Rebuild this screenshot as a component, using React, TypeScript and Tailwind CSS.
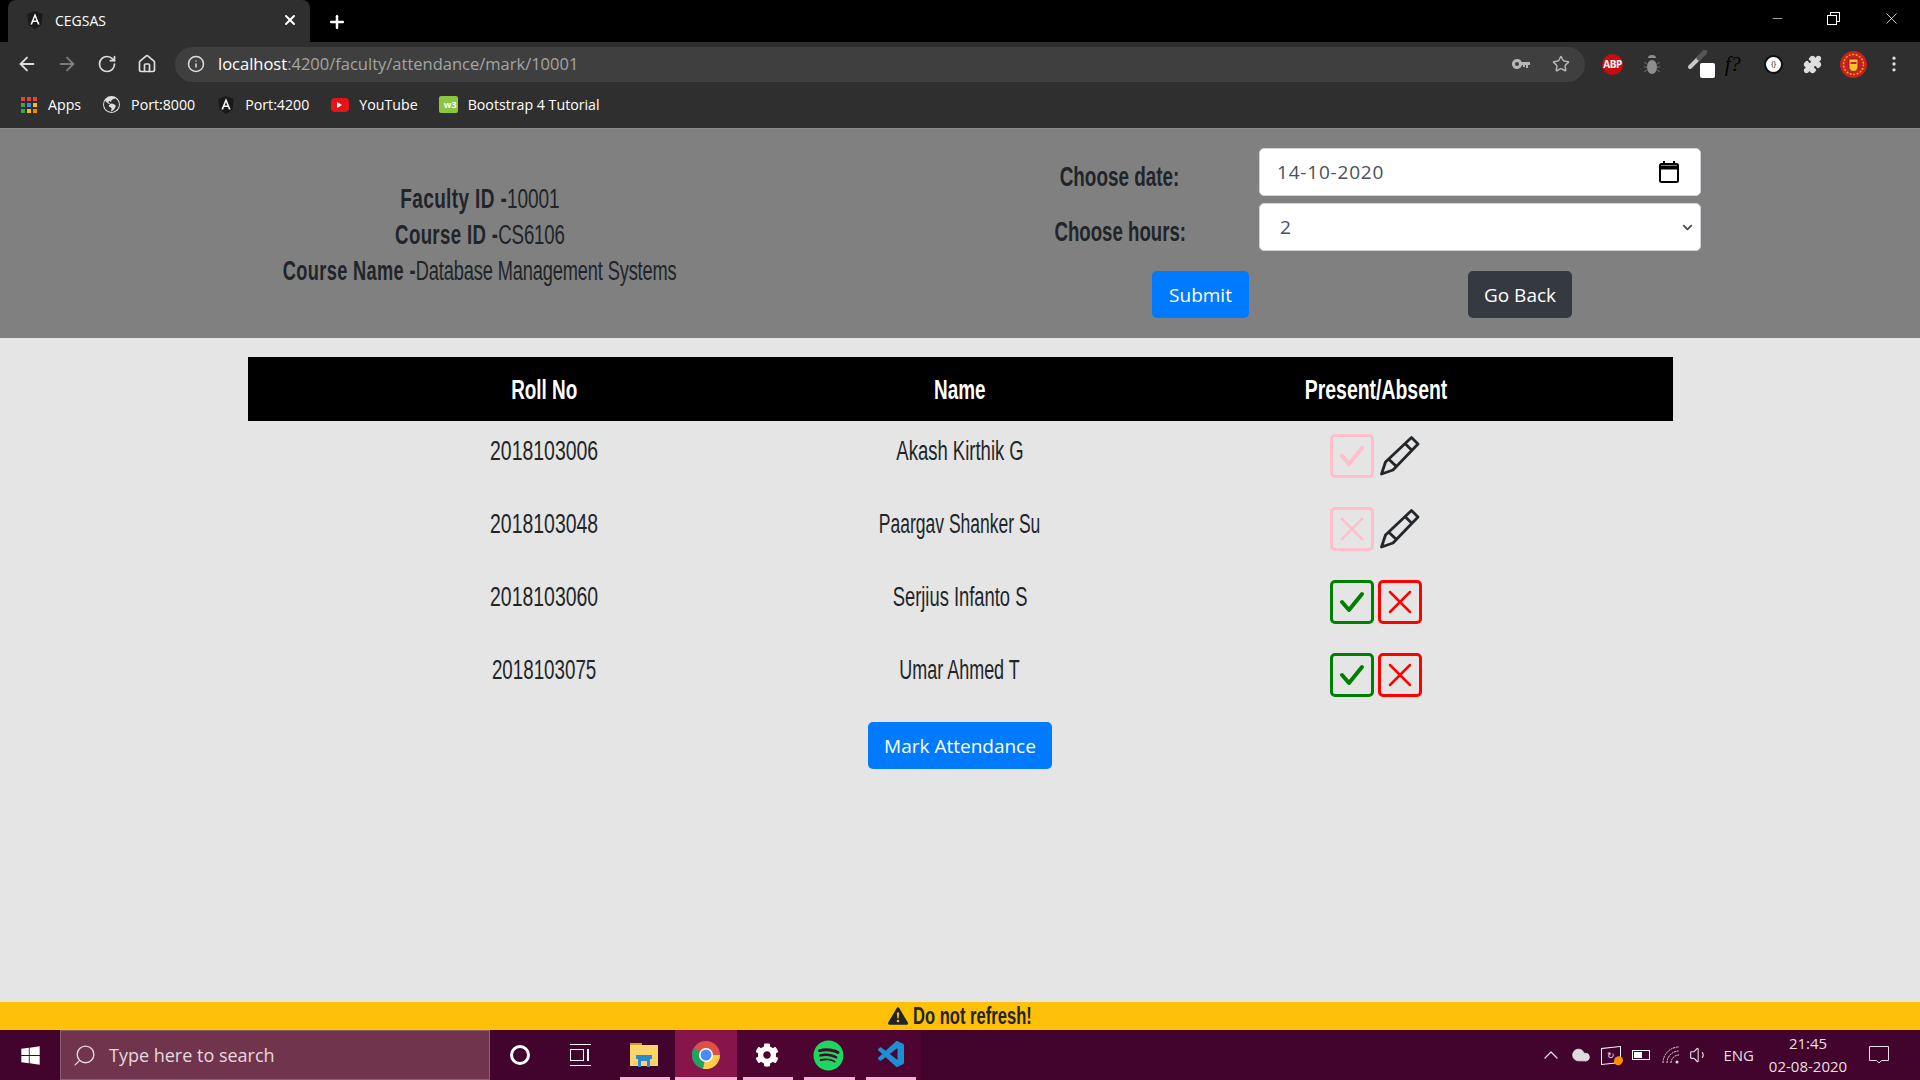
import {
  ArrowLeft,
  ArrowRight,
  RotateCw,
  Home,
  Info,
  Star,
  Puzzle,
  EllipsisVertical,
  Plus,
  X,
  Minus,
  Search,
  ChevronUp,
  ChevronDown,
  Cloud,
  Volume1,
} from "lucide-react";
import { BsExclamationTriangleFill, BsGlobeAmericas } from "react-icons/bs";
import { FaWindows, FaSpotify, FaCog } from "react-icons/fa";
import { VscVscode } from "react-icons/vsc";

const ui = "font-['Open_Sans',sans-serif]";
const narrow = "font-['Liberation_Sans',sans-serif] text-[27px]";

// no condensed face installed, so the heading text gets squeezed per string
const students = [
  { roll: "2018103006", rollFit: "scale-x-[0.72]", name: "Akash Kirthik G", nameFit: "scale-x-[0.685]", state: "present" },
  { roll: "2018103048", rollFit: "scale-x-[0.72]", name: "Paargav Shanker Su", nameFit: "scale-x-[0.648]", state: "absent" },
  { roll: "2018103060", rollFit: "scale-x-[0.72]", name: "Serjius Infanto S", nameFit: "scale-x-[0.68]", state: "open" },
  { roll: "2018103075", rollFit: "scale-x-[0.695]", name: "Umar Ahmed T", nameFit: "scale-x-[0.665]", state: "open" },
];

function Squeezed({ fit, children }: { fit: string; children: React.ReactNode }) {
  return <span className={`inline-block whitespace-nowrap ${fit}`}>{children}</span>;
}

function DetailLine({ fit, label, value }: { fit: string; label: string; value: string }) {
  return (
    <Squeezed fit={fit}>
      <b className="tracking-[0.5px]">{label}</b>
      <span className="tracking-[-0.2px]">{value}</span>
    </Squeezed>
  );
}

function AngularLogo({ size = 18 }: { size?: number }) {
  return (
    <svg width={size} height={size} viewBox="0 0 24 24">
      <path d="M12 0 1.500 4l1.800 14.200L12 24l8.700-5.800L22.500 4z" fill="#1a1a1a" />
      <path d="M12 3 5.800 18h2.400l1.200-3.200h5.200l1.200 3.200h2.400zm-1.800 9.800L12 8l1.800 4.800z" fill="#fff" />
    </svg>
  );
}

function ChromeLogo() {
  return (
    <svg width="28" height="28" viewBox="0 0 28 28">
      <circle cx="14" cy="14" r="14" fill="#dd5144" />
      <path d="M14 14 1.900 7A14 14 0 0 0 11 27.700z" fill="#1da462" />
      <path d="M14 14h14A14 14 0 0 1 11 27.700z" fill="#ffcd46" />
      <circle cx="14" cy="14" r="7" fill="#fff" />
      <circle cx="14" cy="14" r="5.500" fill="#4c8bf5" />
    </svg>
  );
}

function ExplorerIcon() {
  return (
    <svg width="28" height="24" viewBox="0 0 28 24">
      <path d="M0 0h12v4H0z" fill="#d99a1c" />
      <rect x="0" y="2" width="28" height="21" fill="#fcd56a" />
      <path d="M8 24v-8H6v-4h16v4h-2v8h-3v-6h-6v6z" fill="#2a8ad4" />
    </svg>
  );
}

function AppsGrid() {
  const colors = ["#ea4335", "#ea4335", "#ea4335", "#34a853", "#4285f4", "#fbbc05", "#34a853", "#fbbc05", "#ea8a00"];
  return (
    <div className="grid grid-cols-3 gap-[2px] w-[16px]">
      {colors.map((color, i) => (
        <span key={i} className="w-[4px] h-[4px]" style={{ backgroundColor: color }} />
      ))}
    </div>
  );
}

function Bookmark({ icon, label }: { icon: React.ReactNode; label: string }) {
  return (
    <div className="flex items-center gap-[10px] text-[14.200px] text-white">
      <span className="w-[19px] flex justify-center">{icon}</span>
      {label}
    </div>
  );
}

function KeyIcon() {
  return (
    <svg width="18" height="10" viewBox="0 0 18 10" className="ml-auto" fill="#b5b5b5">
      <path d="M5 0a5 5 0 1 1-4.600 7A5 5 0 0 1 5 0zm0 3a2 2 0 1 0 0 4 2 2 0 0 0 0-4z" fillRule="evenodd" />
      <path d="M9 3h9v3h-2v3h-2V6h-1v2h-2V6H9z" />
    </svg>
  );
}

function BugIcon() {
  return (
    <svg width="18" height="22" viewBox="0 0 18 22" className="ml-[20px]" stroke="#6f6f6f" fill="none">
      <path d="M1 9l3 2M1 14h3M1 19l3-2M17 9l-3 2M17 14h-3M17 19l-3-2" />
      <ellipse cx="9" cy="14" rx="5" ry="7" fill="#8f8f8f" stroke="none" />
      <path d="M5 5a4 3 0 0 1 8 0z" fill="#8f8f8f" stroke="none" />
    </svg>
  );
}

function DropperIcon() {
  return (
    <div className="ml-[26px] w-[28px] h-[28px] relative">
      <svg width="20" height="20" viewBox="0 0 20 20" className="absolute left-0 top-0">
        <path d="M3 17 13 7" stroke="#c8c8c8" strokeWidth="4" strokeLinecap="round" />
        <path d="M12 8l6-6" stroke="#555" strokeWidth="5" strokeLinecap="round" />
      </svg>
      <span className="absolute right-0 bottom-0 w-[15px] h-[15px] bg-white rounded-[2px]" />
    </div>
  );
}

function UnitedCrest() {
  return (
    <svg width="27" height="27" viewBox="0 0 27 27" className="ml-[18px]">
      <circle cx="13.500" cy="13.500" r="13.500" fill="#c8201c" />
      <circle cx="13.500" cy="13.500" r="10" fill="none" stroke="#e8a820" strokeWidth="1.500" strokeDasharray="2 1.500" />
      <path d="M9 8h9v8a4.500 4.500 0 0 1-9 0z" fill="#f4c430" stroke="#8a1210" strokeWidth="0.800" />
      <path d="M10.500 11h6v2h-6z" fill="#c8201c" />
    </svg>
  );
}

function BrowserChrome() {
  return (
    <header className={`${ui} shrink-0`}>
      {/* Tabs */}
      <div className="h-[42px] bg-black flex items-end pl-[8px]">
        <div className="w-[302px] h-[42px] bg-[#2f2f2f] rounded-t-[8px] flex items-center pl-[18px] pr-[12px] pb-[2px] text-white text-[14px]">
          <AngularLogo />
          <span className="ml-[11px]">CEGSAS</span>
          <X size={16} strokeWidth={3} className="ml-auto" />
        </div>
        <Plus size={20} strokeWidth={3} className="text-white ml-[17px] mb-[10px]" />
        <div className="ml-auto flex items-center h-full text-white pb-[6px]">
          <Minus size={15} strokeWidth={1} />
          <div className="ml-[42px] w-[13px] h-[13px] relative">
            <span className="absolute right-0 top-0 w-[10px] h-[10px] border border-white" />
            <span className="absolute left-0 bottom-0 w-[10px] h-[10px] border border-white bg-black" />
          </div>
          <X size={19} strokeWidth={1} className="ml-[42px] mr-[19px]" />
        </div>
      </div>

      {/* Address bar */}
      <div className="h-[44px] bg-[#2f2f2f] flex items-center pl-[16px]">
        <ArrowLeft size={22} className="text-[#dedede]" />
        <ArrowRight size={22} className="text-[#7b7b7b] ml-[18px]" />
        <RotateCw size={20} className="text-[#dedede] ml-[19px]" />
        <Home size={20} className="text-[#dedede] ml-[20px]" />
        <div className="ml-[18px] w-[1410px] h-[35px] bg-[#3f3f3f] rounded-full flex items-center pl-[12px] pr-[15px] text-[16.500px]">
          <Info size={18} className="text-[#dedede]" />
          <span className="ml-[13px] text-white">localhost</span>
          <span className="text-[#a5a5a5]">:4200/faculty/attendance/mark/10001</span>
          <KeyIcon />
          <Star size={18} className="ml-[22px] text-[#b5b5b5]" />
        </div>
        <div className="ml-[17px] w-[21px] h-[21px] rounded-full bg-[#c70d0d] flex items-center justify-center text-white text-[10px] font-bold tracking-tighter">
          ABP
        </div>
        <BugIcon />
        <DropperIcon />
        <span className="ml-[10px] w-[24px] font-['Liberation_Serif',serif] italic text-[20px] text-black">f?</span>
        <div className="ml-[15px] w-[19px] h-[19px] rounded-full bg-white border-2 border-[#111] flex items-center justify-center text-[7px] text-black">
          {"{}"}
        </div>
        <Puzzle size={19} fill="#dedede" className="ml-[20px] text-[#dedede]" />
        <UnitedCrest />
        <EllipsisVertical size={20} className="ml-[17px] text-[#dedede]" />
      </div>

      {/* Bookmarks */}
      <div className="h-[43px] pb-[4px] bg-[#2f2f2f] border-b border-[#8a8a8a] flex items-center pl-[19px] gap-[21px]">
        <Bookmark icon={<AppsGrid />} label="Apps" />
        <Bookmark icon={<BsGlobeAmericas size={17} className="text-[#dedede]" />} label="Port:8000" />
        <Bookmark icon={<AngularLogo />} label="Port:4200" />
        <Bookmark
          icon={
            <span className="w-[18px] h-[14px] bg-[#e6141a] rounded-[4px] flex items-center justify-center">
              <span className="border-l-[5px] border-l-white border-y-[3px] border-y-transparent" />
            </span>
          }
          label="YouTube"
        />
        <Bookmark
          icon={<span className="w-[19px] h-[17px] bg-[#8cc63e] rounded-[2px] text-white text-[9px] font-bold leading-[17px] text-right pr-[1px]">w3</span>}
          label="Bootstrap 4 Tutorial"
        />
      </div>
    </header>
  );
}

function CheckButton({ dim }: { dim?: boolean }) {
  return (
    <span className={`w-[44px] h-[44px] rounded-[5px] border-[3px] flex items-center justify-center ${dim ? "border-[#ffc0cb] text-[#ffc0cb]" : "border-[#008000] text-[#008000]"}`}>
      <svg width="26" height="22" viewBox="0 0 26 22" fill="none" stroke="currentColor" strokeWidth="4" strokeLinecap="round" strokeLinejoin="round">
        <path d="M3 11l7 8L23 3" />
      </svg>
    </span>
  );
}

function CrossButton({ dim }: { dim?: boolean }) {
  return (
    <span className={`w-[44px] h-[44px] rounded-[5px] border-[3px] flex items-center justify-center ${dim ? "border-[#ffc0cb] text-[#ffc0cb]" : "border-[#ff0000] text-[#ff0000]"}`}>
      <svg width="24" height="24" viewBox="0 0 24 24" fill="none" stroke="currentColor" strokeWidth="2.500" strokeLinecap="round">
        <path d="M2 2l20 20M22 2L2 22" />
      </svg>
    </span>
  );
}

function PencilIcon() {
  return (
    <svg width="40" height="40" viewBox="0 0 40 40" fill="none" stroke="#23272b" strokeWidth="2.800" strokeLinejoin="round" className="ml-[6px]">
      <path d="M31.500 1.500 38 8 13 34 1.500 38 5.500 26z" />
      <path d="M25.500 8 32 14.500M8.500 23l8 7.500" />
    </svg>
  );
}

function AttendanceCell({ state }: { state: string }) {
  if (state === "open") {
    return (
      <div className="flex gap-[4px]">
        <CheckButton />
        <CrossButton />
      </div>
    );
  }
  return (
    <div className="flex items-center">
      {state === "present" ? <CheckButton dim /> : <CrossButton dim />}
      <PencilIcon />
    </div>
  );
}

function TaskIcon({ active, lit, children }: { active?: boolean; lit?: boolean; children: React.ReactNode }) {
  return (
    <div className={`w-[61.500px] flex items-center justify-center relative ${active ? "bg-[#87144a]" : lit ? "bg-[#4e0430]" : ""}`}>
      {children}
      <span className={`absolute bottom-0 h-[3px] bg-[#f4b4d4] ${active ? "left-0 right-0" : "left-[6px] right-[5px]"}`} />
    </div>
  );
}

function Taskbar() {
  return (
    <footer className={`${ui} h-[50px] shrink-0 bg-[#42042c] flex items-stretch text-white`}>
      <div className="w-[60px] flex items-center justify-center">
        <FaWindows size={21} />
      </div>
      <div className="w-[430px] bg-[#70344c] border border-[#8a5f74] flex items-center pl-[11px] gap-[12px] text-[18px] text-[#e7d9df]">
        <Search size={25} strokeWidth={1.300} className="-scale-x-100" />
        Type here to search
      </div>
      <div className="w-[60px] flex items-center justify-center">
        <span className="w-[20px] h-[20px] rounded-full border-[3px] border-white" />
      </div>
      <div className="w-[60px] flex items-center justify-center">
        <div className="w-[21px] h-[22px] border-y border-white flex items-center">
          <span className="w-[14px] h-[12px] border border-white" />
          <span className="w-[2px] h-[12px] ml-[3px] bg-white" />
        </div>
      </div>
      <div className="w-[3.500px]" />
      <TaskIcon>
        <ExplorerIcon />
      </TaskIcon>
      <TaskIcon active>
        <ChromeLogo />
      </TaskIcon>
      <TaskIcon lit>
        <FaCog size={24} />
      </TaskIcon>
      <TaskIcon lit>
        <FaSpotify size={31} className="text-[#1ed760]" />
      </TaskIcon>
      <TaskIcon lit>
        <VscVscode size={32} className="text-[#1e8fd5] ml-[3px]" />
      </TaskIcon>

      <div className="ml-auto flex items-center text-[#e9dfe5]">
        <ChevronUp size={24} strokeWidth={1.200} />
        <Cloud size={20} fill="#dcdcdc" strokeWidth={1} className="ml-[8px]" />
        <span className="ml-[10px] w-[20px] h-[17px] border border-white relative -skew-y-6 flex items-center justify-center text-[9px]">
          ↻
          <span className="absolute -right-[3px] -bottom-[3px] w-[9px] h-[9px] rounded-full bg-[#ff8c00]" />
        </span>
        <span className="ml-[11px] w-[18px] h-[10px] border border-white p-[1px]">
          <span className="block w-[8px] h-full bg-white" />
        </span>
        <svg width="20" height="18" viewBox="0 0 20 18" fill="none" stroke="currentColor" strokeWidth="1" strokeDasharray="2 0.700" className="ml-[12px]">
          <path d="M1 17A16 16 0 0 1 17 1M5 17A12 12 0 0 1 17 5M9 17a8 8 0 0 1 8-8" />
          <circle cx="15" cy="16" r="1.500" fill="currentColor" stroke="none" />
        </svg>
        <Volume1 size={20} strokeWidth={1.300} className="ml-[7px]" />
        <span className="ml-[14px] text-[15px]">ENG</span>
        <div className="ml-[14px] w-[80px] text-center text-[15px] leading-[23px] whitespace-nowrap">
          <div>21:45</div>
          <div>02-08-2020</div>
        </div>
        <div className="w-[72px] pr-[10px] flex justify-center">
          <svg width="20" height="18" viewBox="0 0 20 18" fill="none" stroke="currentColor" strokeWidth="1">
            <path d="M.5.500h19v14h-7l-2.500 2.500L7.500 14.500h-7z" />
          </svg>
        </div>
      </div>
    </footer>
  );
}

export default function App() {
  return (
    <div className="h-screen w-full flex flex-col bg-[#e5e5e5] overflow-hidden">
      <BrowserChrome />

      {/* Faculty details and form */}
      <section className="h-[209px] shrink-0 bg-[#808080] flex text-[#212529]">
        <div className={`${narrow} w-[960px] pt-[3px] flex flex-col items-center justify-center leading-[36px]`}>
          <DetailLine fit="scale-x-[0.705]" label="Faculty ID -" value="10001" />
          <DetailLine fit="scale-x-[0.69]" label="Course ID -" value="CS6106" />
          <DetailLine fit="scale-x-[0.675]" label="Course Name -" value="Database Management Systems" />
        </div>
        <div className="flex-1 pt-[19px] pl-[96px]">
          <div className="flex h-[48px] items-center">
            <span className={`${narrow} w-[203px] pr-[75px] pt-[10px] flex justify-center font-bold`}>
              <Squeezed fit="scale-x-[0.70]">Choose date:</Squeezed>
            </span>
            <div className={`${ui} w-[442px] h-[48px] bg-white border border-[#ced4da] rounded-[5px] flex items-center justify-between pl-[17px] pr-[21px] text-[19px] text-[#495057]`}>
              <span className="tracking-[0.8px] pt-[1px]">14-10-2020</span>
              <svg width="20" height="22" viewBox="0 0 20 22" fill="none" stroke="#000" strokeWidth="2">
                <rect x="1" y="3" width="18" height="18" rx="1.500" />
                <path d="M1 6.500h18" strokeWidth="4" />
                <path d="M5 0v3M15 0v3" />
              </svg>
            </div>
          </div>
          <div className="flex h-[48px] items-center mt-[7px]">
            <span className={`${narrow} w-[203px] pr-[75px] pt-[10px] flex justify-center font-bold`}>
              <Squeezed fit="scale-x-[0.69]">Choose hours:</Squeezed>
            </span>
            <div className={`${ui} w-[442px] h-[48px] bg-white border border-[#ced4da] rounded-[5px] flex items-center justify-between pl-[20px] pr-[5px] text-[19px] text-[#495057]`}>
              <span className="pt-[1px]">2</span>
              <ChevronDown size={15} strokeWidth={3} />
            </div>
          </div>
          <div className={`${ui} flex mt-[20px] text-[19px] text-white`}>
            <button className="ml-[96px] w-[97px] h-[47px] pt-[1px] bg-[#007bff] rounded-[5px]">Submit</button>
            <button className="ml-[219px] w-[104px] h-[47px] pt-[1px] bg-[#343a40] rounded-[5px]">Go Back</button>
          </div>
        </div>
      </section>

      {/* Attendance table */}
      <main className="flex-1 pt-[19px] pl-[248px] pr-[247px] text-[#212529]">
        <div className={`${narrow} grid grid-cols-[592px_240px_1fr] items-center h-[64px] pt-[2px] bg-black text-white text-center font-bold`}>
          <div><Squeezed fit="scale-x-[0.70]">Roll No</Squeezed></div>
          <div><Squeezed fit="scale-x-[0.70]">Name</Squeezed></div>
          <div><Squeezed fit="scale-x-[0.72]">Present/Absent</Squeezed></div>
        </div>
        {students.map((student) => (
          <div key={student.roll} className={`${narrow} grid grid-cols-[592px_240px_1fr] h-[73px] pt-[10px]`}>
            <div className="flex justify-center"><Squeezed fit={student.rollFit}>{student.roll}</Squeezed></div>
            <div className="flex justify-center"><Squeezed fit={student.nameFit}>{student.name}</Squeezed></div>
            <div className="flex justify-center pr-[1px] pt-[3px]">
              <div className="w-[92px]">
                <AttendanceCell state={student.state} />
              </div>
            </div>
          </div>
        ))}
        <div className="flex justify-center mt-[9px] pr-[1px]">
          <button className={`${ui} w-[184px] h-[47px] pt-[1px] bg-[#007bff] rounded-[5px] text-white text-[19px]`}>Mark Attendance</button>
        </div>
      </main>

      {/* Warning */}
      <div className={`${narrow} h-[28px] shrink-0 bg-[#ffc107] flex items-center justify-center gap-[5px] font-bold text-[#212529]`}>
        <BsExclamationTriangleFill size={20} />
        <span className="w-[119px] flex justify-center text-[23px]">
          <Squeezed fit="scale-x-[0.72]">Do not refresh!</Squeezed>
        </span>
      </div>

      <Taskbar />
    </div>
  );
}
